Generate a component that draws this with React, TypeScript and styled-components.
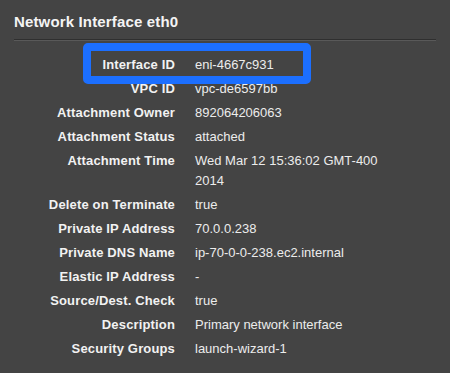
import { FC, Fragment } from "react"
import styled, { createGlobalStyle } from "styled-components"

const GlobalStyle = createGlobalStyle`
  html, body {
    margin: 0;
    padding: 0;
    background-color: #444444;
  }
`

interface Detail {
  label: string
  value: string
}

const details: Detail[] = [
  { label: "Interface ID", value: "eni-4667c931" },
  { label: "VPC ID", value: "vpc-de6597bb" },
  { label: "Attachment Owner", value: "892064206063" },
  { label: "Attachment Status", value: "attached" },
  { label: "Attachment Time", value: "Wed Mar 12 15:36:02 GMT-400 2014" },
  { label: "Delete on Terminate", value: "true" },
  { label: "Private IP Address", value: "70.0.0.238" },
  { label: "Private DNS Name", value: "ip-70-0-0-238.ec2.internal" },
  { label: "Elastic IP Address", value: "-" },
  { label: "Source/Dest. Check", value: "true" },
  { label: "Description", value: "Primary network interface" },
  { label: "Security Groups", value: "launch-wizard-1" },
]

const Panel = styled.div`
  width: 450px;
  height: 373px;
  box-sizing: border-box;
  padding: 13px 14px 0;
  background-color: #444444;
  font-family: "Liberation Sans", Arial, sans-serif;
  overflow: hidden;
`

const Heading = styled.h3`
  margin: 0;
  padding-bottom: 8px;
  font-size: 15px;
  line-height: 18px;
  font-weight: 700;
  letter-spacing: 0.15px;
  color: #f4f4f4;
  border-bottom: 1px solid #2f2f2f;
  box-shadow: 0 1px 0 #595959;
`

const Grid = styled.div`
  position: relative;
  display: grid;
  grid-template-columns: 161px 200px;
  column-gap: 20px;
  row-gap: 4px;
  margin-top: 15px;
  font-size: 13px;
  line-height: 20px;
`

const Label = styled.div`
  text-align: right;
  font-weight: 700;
  letter-spacing: 0.15px;
  color: #f2f2f2;
  white-space: nowrap;
`

const Value = styled.div`
  color: #ececec;
`

// blue annotation drawn over the first row
const Highlight = styled.div`
  position: absolute;
  top: -12px;
  left: 69px;
  width: 228px;
  height: 41px;
  box-sizing: border-box;
  border: 8px solid #1c6fff;
  border-radius: 5px;
  pointer-events: none;
`

const App: FC = () => (
  <>
    <GlobalStyle />
    <Panel>
      <Heading>Network Interface eth0</Heading>
      <Grid>
        <Highlight />
        {details.map((d) => (
          <Fragment key={d.label}>
            <Label>{d.label}</Label>
            <Value>{d.value}</Value>
          </Fragment>
        ))}
      </Grid>
    </Panel>
  </>
)

export default App
